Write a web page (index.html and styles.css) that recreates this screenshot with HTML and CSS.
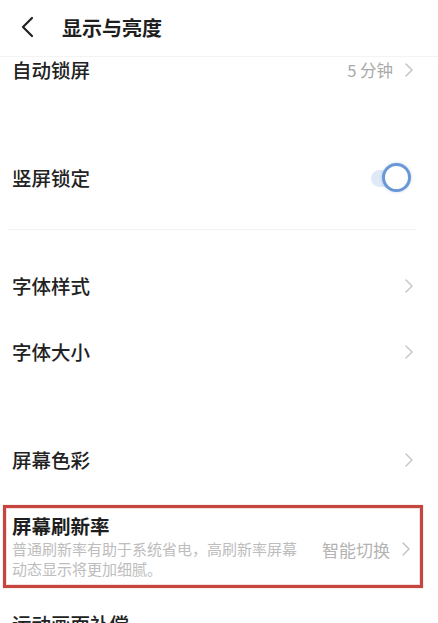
FILE: index.html
```html
<!DOCTYPE html>
<html lang="zh">
<head>
<meta charset="utf-8">
<link rel="stylesheet" href="styles.css">
</head>
<body>
<div class="page">
  <header class="header">
    <svg class="back" width="14" height="22" viewBox="0 0 14 22"><path d="M12 2 L3 11 L12 20" fill="none" stroke="#222" stroke-width="2.2" stroke-linecap="round" stroke-linejoin="round"/></svg>
    <span class="title">显示与亮度</span>
  </header>
  <div class="divider d-top"></div>
  <div class="row r1">
    <span class="label">自动锁屏</span>
    <span class="right"><span class="value">5 分钟</span><svg class="chev" width="10" height="16" viewBox="0 0 10 16"><path d="M2 2 L8 8 L2 14" fill="none" stroke="#c4c4c4" stroke-width="1.5" stroke-linecap="round" stroke-linejoin="round"/></svg></span>
  </div>
  <div class="row r2">
    <span class="label">竖屏锁定</span>
    <span class="toggle"><span class="track"></span><span class="knob"></span></span>
  </div>
  <div class="divider d-mid"></div>
  <div class="row r3">
    <span class="label">字体样式</span>
    <svg class="chev" width="10" height="16" viewBox="0 0 10 16"><path d="M2 2 L8 8 L2 14" fill="none" stroke="#c8c8c8" stroke-width="1.5" stroke-linecap="round" stroke-linejoin="round"/></svg>
  </div>
  <div class="row r4">
    <span class="label">字体大小</span>
    <svg class="chev" width="10" height="16" viewBox="0 0 10 16"><path d="M2 2 L8 8 L2 14" fill="none" stroke="#c8c8c8" stroke-width="1.5" stroke-linecap="round" stroke-linejoin="round"/></svg>
  </div>
  <div class="row r5">
    <span class="label">屏幕色彩</span>
    <svg class="chev" width="10" height="16" viewBox="0 0 10 16"><path d="M2 2 L8 8 L2 14" fill="none" stroke="#c8c8c8" stroke-width="1.5" stroke-linecap="round" stroke-linejoin="round"/></svg>
  </div>
  <div class="highlight">
    <div class="hl-text">
      <div class="hl-title">屏幕刷新率</div>
      <div class="hl-desc">普通刷新率有助于系统省电，高刷新率屏幕动态显示将更加细腻。</div>
    </div>
    <span class="right"><span class="value big">智能切换</span><svg class="chev" width="10" height="16" viewBox="0 0 10 16"><path d="M2 2 L8 8 L2 14" fill="none" stroke="#c4c4c4" stroke-width="1.5" stroke-linecap="round" stroke-linejoin="round"/></svg></span>
  </div>
  <div class="row r7">
    <span class="label">运动画面补偿</span>
  </div>
</div>
</body>
</html>
```

FILE: styles.css
```css
html, body {
  margin: 0;
  padding: 0;
  background: #ffffff;
}
body {
  font-family: "Noto Sans CJK SC", "Noto Sans", sans-serif;
  color: #222222;
  width: 438px;
  height: 623px;
  overflow: hidden;
}
.page {
  display: flex;
  flex-direction: column;
}
.header {
  height: 54px;
  display: flex;
  align-items: center;
  padding-left: 20px;
  gap: 28px;
}
.back {
  display: block;
}
.title {
  font-size: 20px;
  font-weight: 700;
  color: #1e1e1e;
}
.divider {
  height: 1px;
  background: #f3f3f3;
  margin-left: 8px;
  margin-right: 22px;
}
.d-top { margin-top: 2px; margin-left: 0; margin-right: 0; }
.d-mid { margin-top: 38px; }
.row {
  height: 26px;
  display: flex;
  align-items: center;
  justify-content: space-between;
  padding-left: 12px;
  padding-right: 24px;
}
.label {
  font-size: 19.5px;
  line-height: 26px;
  font-weight: 500;
  color: #222;
}
.r1 { margin-top: 0; }
.r2 { margin-top: 82px; padding-right: 27px; }
.r3 { margin-top: 43px; }
.r4 { margin-top: 40px; }
.r5 { margin-top: 82px; }
.r7 { margin-top: 23px; }
.right {
  display: flex;
  align-items: center;
  gap: 11px;
}
.value {
  font-size: 16.5px;
  color: #a9a9a9;
}
.value.big {
  font-size: 17px;
  color: #b3b3b3;
}
.chev { display: block; }
.toggle {
  position: relative;
  width: 40px;
  height: 30px;
  display: block;
}
.track {
  position: absolute;
  left: 0;
  top: 7px;
  width: 30px;
  height: 17px;
  border-radius: 9px;
  background: #dfe9f7;
}
.knob {
  position: absolute;
  right: 0;
  top: 0;
  width: 23px;
  height: 23px;
  border-radius: 50%;
  border: 3px solid #6a97d6;
  background: #ffffff;
  box-shadow: 0 0 3px rgba(80, 120, 190, 0.35);
}
.highlight {
  margin-top: 32px;
  margin-left: 3px;
  width: 420px;
  height: 83px;
  box-sizing: border-box;
  border: 3px solid #c4463f;
  padding: 5px 9px 0 6px;
  display: flex;
  align-items: center;
  justify-content: space-between;
  box-shadow: 0 0 1px rgba(180, 60, 60, 0.5), inset 0 0 0 1px #f6dede;
}
.hl-text {
  display: flex;
  flex-direction: column;
  align-self: flex-start;
}
.hl-title {
  font-size: 19.5px;
  line-height: 26px;
  font-weight: 700;
  color: #1e1e1e;
}
.hl-desc {
  width: 292px;
  font-size: 15px;
  line-height: 20px;
  color: #bdbdbd;
}
```
